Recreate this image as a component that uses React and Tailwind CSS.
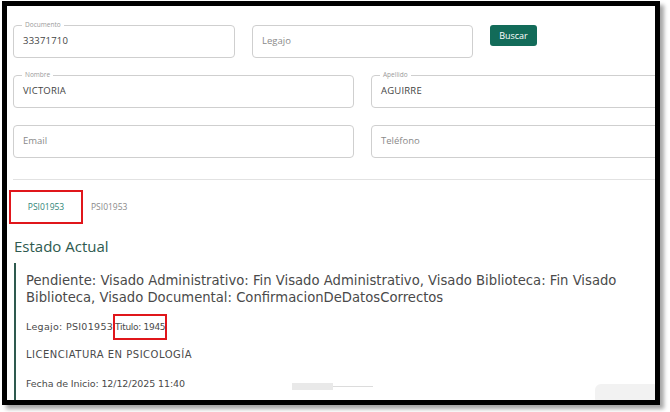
import React from "react";

// Outlined text field with a label notched into the top border
const Field = ({ label, value, placeholder, className = "" }) => {
  return (
    <div className={`relative h-[33px] rounded-[4px] border border-[#cfcfcf] bg-white ${className}`}>
      {label && (
        <span className="absolute left-[8px] top-[-5px] bg-white px-[3px] text-[6.5px] leading-[8px] text-[#9a9a9a]">
          {label}
        </span>
      )}
      <div className="flex h-full items-center px-[9px]">
        {value ? (
          <span className="text-[9.5px] tracking-[0.2px] text-[#444]">{value}</span>
        ) : (
          <span className="text-[9.5px] text-[#8a8a8a]">{placeholder}</span>
        )}
      </div>
    </div>
  );
};

const App = () => {
  return (
    <div className="h-[412px] w-[670px] overflow-hidden bg-white font-['Open_Sans',sans-serif]">
      <div className="ml-[2px] mt-[1px] h-[404px] w-[658px] border-[5px] border-black shadow-[4px_4px_4px_rgba(0,0,0,0.35)]">
        <div className="relative h-full w-full overflow-hidden bg-white">
          {/* search form */}
          <div className="pl-[6px] pt-[19px]">
            <div className="flex items-start">
              <Field label="Documento" value="33371710" className="w-[222px]" />
              <Field placeholder="Legajo" className="ml-[17px] w-[221px]" />
              <button className="ml-[17px] h-[21px] w-[47px] rounded-[3px] bg-[#126b59] text-[9px] text-white">
                Buscar
              </button>
            </div>
            <div className="mt-[17px] flex">
              <Field label="Nombre" value="VICTORIA" className="w-[341px] shrink-0" />
              <Field label="Apellido" value="AGUIRRE" className="ml-[17px] w-[341px] shrink-0" />
            </div>
            <div className="mt-[17px] flex">
              <Field placeholder="Email" className="w-[341px] shrink-0" />
              <Field placeholder="Teléfono" className="ml-[17px] w-[341px] shrink-0" />
            </div>
            <div className="mt-[21px] h-px bg-[#e2e2e2]" />
          </div>

          {/* legajo tabs */}
          <div className="ml-[2px] mt-[10px] flex items-center">
            <div className="flex h-[34px] w-[74px] items-center justify-center border-2 border-[#e0161b]">
              <span className="text-[8.5px] text-[#2f8578]">PSI01953</span>
            </div>
            <span className="ml-[8px] text-[8.5px] text-[#8a8a8a]">PSI01953</span>
          </div>

          {/* current status */}
          <div className="mt-[12px] pl-[7px] text-[15px] leading-[20px] text-[#2e5a4f]">Estado Actual</div>
          <div className="ml-[7px] mt-[7px] border-l-2 border-[#2e5a4f] pb-[40px] pl-[10px] pt-[9px] font-['DejaVu_Sans',sans-serif] text-[#4a4a4a]">
            <p className="w-[626px] text-[13.2px] leading-[17px]">
              Pendiente: Visado Administrativo: Fin Visado Administrativo, Visado Biblioteca: Fin Visado
              Biblioteca, Visado Documental: ConfirmacionDeDatosCorrectos
            </p>
            <div className="mt-[8px] flex items-center text-[9.5px]">
              <span className="tracking-[0.3px]">Legajo: PSI01953</span>
              <span className="border-2 border-[#e0161b] py-[5px] text-[9px] leading-[12px] tracking-[-0.3px]">Titulo: 1945</span>
            </div>
            <div className="mt-[8px] text-[10px] leading-[14px] tracking-[0.5px]">LICENCIATURA EN PSICOLOGÍA</div>
            <div className="mt-[15px] text-[9.5px] leading-[14px] tracking-[-0.1px]">Fecha de Inicio: 12/12/2025 11:40</div>
          </div>

          {/* partially visible controls at the bottom edge */}
          <div className="absolute bottom-[10px] left-[285px] flex items-center">
            <div className="h-[7px] w-[41px] bg-[#e9e9e9]" />
            <div className="h-px w-[40px] bg-[#dcdcdc]" />
          </div>
          <div className="absolute bottom-[-4px] right-[-4px] h-[20px] w-[64px] rounded-[6px] bg-[#f2f2f2]" />
        </div>
      </div>
    </div>
  );
};

export default App;
